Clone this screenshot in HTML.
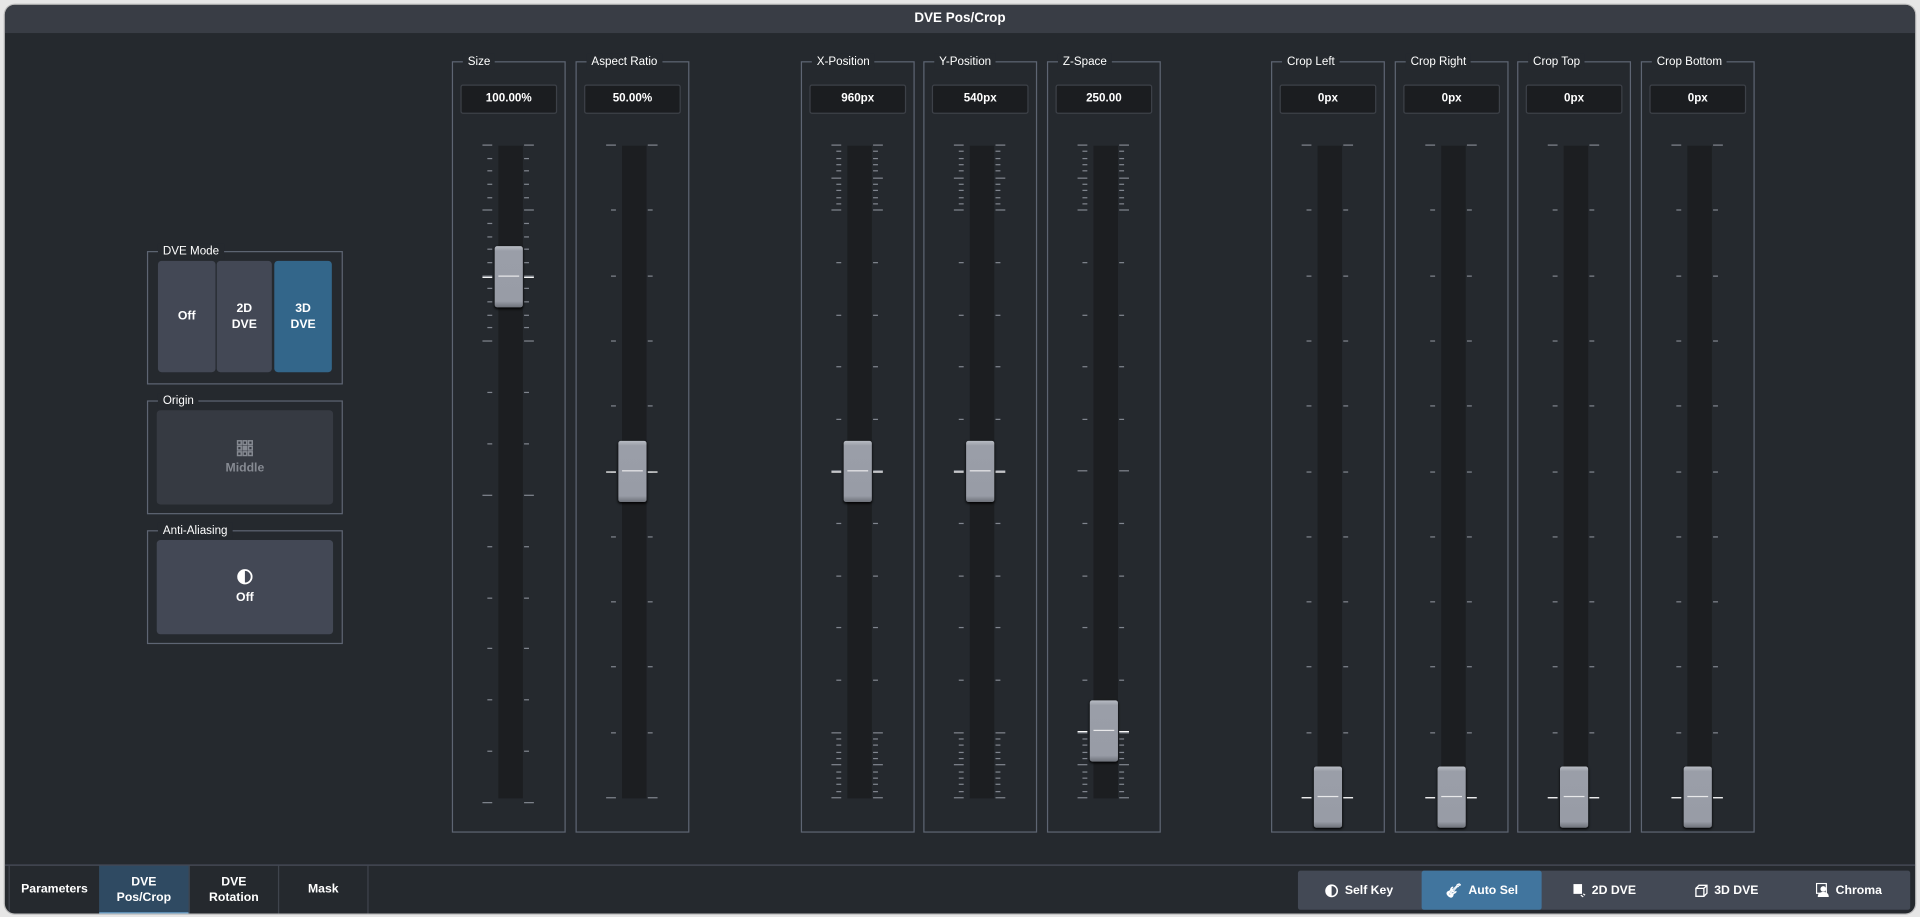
<!DOCTYPE html>
<html><head><meta charset="utf-8"><style>
html,body{margin:0;padding:0;background:#e6e6e6;overflow:hidden;width:1920px;height:917px}
#s{position:absolute;left:0;top:0;width:1568px;height:749px;transform:scale(1.22449);transform-origin:0 0;font-family:"Liberation Sans",sans-serif;color:#fff}
.win{position:absolute;left:4px;top:4px;width:1560px;height:742px;background:#25292e;border-radius:8px;overflow:hidden;box-shadow:0 0 0 1px #bdbdbd}
.hdr{position:absolute;left:0;top:0;width:100%;height:23px;background:#393d45;text-align:center;font-weight:bold;font-size:11px;line-height:23px}
.abs{position:absolute}
.grp{position:absolute;border:1px solid #5e6573;box-sizing:border-box}
.lbl{position:absolute;top:-7px;left:8px;background:#25292e;padding:0 4px;font-size:9.5px;line-height:13px;color:#fff}
.val{position:absolute;left:6px;right:6px;top:18px;height:24px;background:#1b1d20;border:1px solid #3d4148;border-radius:2px;box-sizing:border-box;text-align:center;font-weight:bold;font-size:9.5px;line-height:22px}
.trk{position:absolute;top:68px;height:533px;width:20px;background:#1c1e21}
.tk{position:absolute;height:1px;background:#80858e}
.hd{position:absolute;width:23px;height:50px;border-radius:2px;background:linear-gradient(#b8bcc4 0,#9a9ea8 8%,#989ca6 90%,#6d7179 100%);box-shadow:0 1px 2px #000}
.hd:after{content:"";position:absolute;left:3px;right:3px;top:24px;height:1px;background:#e8e8ea}
.btn{position:absolute;border-radius:3px;font-weight:bold;font-size:10px;text-align:center;display:flex;align-items:center;justify-content:center;flex-direction:column;line-height:13px}
.tab{position:absolute;top:703px;height:39px;border-right:1px solid #3f444d;font-weight:bold;font-size:10px;text-align:center;display:flex;align-items:center;justify-content:center;line-height:13px}
.rb{position:absolute;top:0;height:32px;font-weight:bold;font-size:10px;display:flex;align-items:center;justify-content:center;gap:5px}
</style></head><body><div id="s"><div class="win">
<div class="hdr">DVE Pos/Crop</div>
<div id="f"></div>

<div class="grp" style="left:116px;top:201px;width:160px;height:109px"><span class="lbl">DVE Mode</span></div>
<div class="btn" style="left:125px;top:209px;width:47px;height:91px;background:#434855">Off</div>
<div class="btn" style="left:173px;top:209px;width:45px;height:91px;background:#434855">2D<br>DVE</div>
<div class="btn" style="left:220px;top:209px;width:47px;height:91px;background:#33668a">3D<br>DVE</div>

<div class="grp" style="left:116px;top:323px;width:160px;height:93px"><span class="lbl">Origin</span></div>
<div class="btn" style="left:124px;top:331px;width:144px;height:77px;background:#363a42;color:#868a92">
<svg width="14" height="14" viewBox="0 0 14 14" style="margin-bottom:3px"><g fill="none" stroke="#868a92" stroke-width="1.2"><rect x="1" y="1" width="3" height="3"/><rect x="5.5" y="1" width="3" height="3"/><rect x="10" y="1" width="3" height="3"/><rect x="1" y="5.5" width="3" height="3"/><rect x="10" y="5.5" width="3" height="3"/><rect x="1" y="10" width="3" height="3"/><rect x="5.5" y="10" width="3" height="3"/><rect x="10" y="10" width="3" height="3"/></g><rect x="5" y="5" width="4" height="4" fill="#868a92"/></svg>Middle</div>

<div class="grp" style="left:116px;top:429px;width:160px;height:93px"><span class="lbl">Anti-Aliasing</span></div>
<div class="btn" style="left:124px;top:437px;width:144px;height:77px;background:#434855">
<svg width="14" height="14" viewBox="0 0 14 14" style="margin-bottom:4px"><circle cx="7" cy="7" r="5.5" fill="none" stroke="#fff" stroke-width="1.5"/><path d="M7 1.5A5.5 5.5 0 0 0 7 12.5Z" fill="#fff"/></svg>Off</div>

<div class="abs" style="left:0;top:702px;width:1560px;height:1px;background:#4a4f5c"></div>
<div class="tab" style="left:3px;width:73px;border-left:1px solid #3f444d">Parameters</div>
<div class="tab" style="left:77px;width:73px;background:#2f4a62;box-shadow:inset 0 -1px #6fa3cc">DVE<br>Pos/Crop</div>
<div class="tab" style="left:151px;width:72px">DVE<br>Rotation</div>
<div class="tab" style="left:224px;width:72px">Mask</div>

<div class="abs" style="left:1056px;top:707px;width:500px;height:32px;background:#434955;border-radius:2px">
<div class="rb" style="left:0;width:100px"><svg width="11" height="11" viewBox="0 0 12 12"><circle cx="6" cy="6" r="5" fill="none" stroke="#fff" stroke-width="1.4"/><path d="M6 1A5 5 0 0 0 6 11Z" fill="#fff"/></svg>Self Key</div>
<div class="rb" style="left:101px;width:98px;background:#41759e;border-radius:2px"><span style="font-size:11px">&#x1F3B8;&#xFE0E;</span>Auto Sel</div>
<div class="rb" style="left:200px;width:100px"><svg width="11" height="12" viewBox="0 0 11 12"><rect x="1" y="1" width="7" height="8" fill="#fff"/><path d="M7 10l2 1.5M9 9l1.5 1" stroke="#fff" stroke-width="1"/></svg>2D DVE</div>
<div class="rb" style="left:300px;width:100px"><svg width="11" height="11" viewBox="0 0 11 11"><path d="M1 3.5h6.5v6.5h-6.5zM1 3.5l2.5-2.5h6.5v6.5l-2.5 2.5M7.5 3.5l2.5-2.5" fill="none" stroke="#fff" stroke-width="1.1"/></svg>3D DVE</div>
<div class="rb" style="left:400px;width:100px"><svg width="11" height="12" viewBox="0 0 11 12"><rect x="0.5" y="0.5" width="8" height="8" fill="none" stroke="#fff"/><circle cx="6" cy="5" r="2.3" fill="#fff"/><path d="M1.5 11.5c0-3 2-4 4.5-4s4.5 1 4.5 4z" fill="#fff"/></svg>Chroma</div>
</div>
</div></div>
<script>
var F=[["Size",365,"100.00%",222,"size"],["Aspect Ratio",466,"50.00%",381,"lin"],["X-Position",650,"960px",381,"xy"],["Y-Position",750,"540px",381,"xy"],["Z-Space",851,"250.00",593,"z"],["Crop Left",1034,"0px",647,"lin"],["Crop Right",1135,"0px",647,"lin"],["Crop Top",1235,"0px",647,"lin"],["Crop Bottom",1336,"0px",647,"lin"]];
var h="";
function tick(cx,y,maj){var l=maj?8:4;h+='<div class="tk" style="left:'+(cx-13-l)+'px;width:'+l+'px;top:'+y+'px"></div><div class="tk" style="left:'+(cx+13)+'px;width:'+l+'px;top:'+y+'px"></div>';}
F.forEach(function(f){var x=f[1],cx=x+46,T=114,B=647;
h+='<div class="grp" style="left:'+x+'px;top:46px;width:93px;height:630px"><span class="lbl">'+f[0]+'</span><div class="val">'+f[2]+'</div><div class="trk" style="left:'+(37)+'px"></div></div>';
var ys=[];
if(f[4]=="lin"){for(var i=0;i<=10;i++)ys.push([T+i*53.3,i==0||i==10]);}
else if(f[4]=="size"){for(var i=0;i<=15;i++)ys.push([T+i*10.66,i%5==0]);for(var i=1;i<=9;i++)ys.push([T+160+i*41.9,i==3||i==9]);}
else{for(var i=0;i<=10;i++){ys.push([T+i*5.33,i%5==0]);ys.push([B-i*5.33,i%5==0]);}for(var i=1;i<10;i++)ys.push([T+53.3+i*42.6,i==5]);}
ys.forEach(function(t){tick(cx,Math.round(t[0]),t[1]);});
h+='<div class="hd" style="left:'+(cx-11.5)+'px;top:'+(f[3]-25)+'px"></div>';
h+='<div class="tk" style="left:'+(cx-21)+'px;width:8px;top:'+f[3]+'px;background:#fff"></div><div class="tk" style="left:'+(cx+13)+'px;width:8px;top:'+f[3]+'px;background:#fff"></div>';
});
document.getElementById("f").innerHTML=h;
</script>
</body></html>
